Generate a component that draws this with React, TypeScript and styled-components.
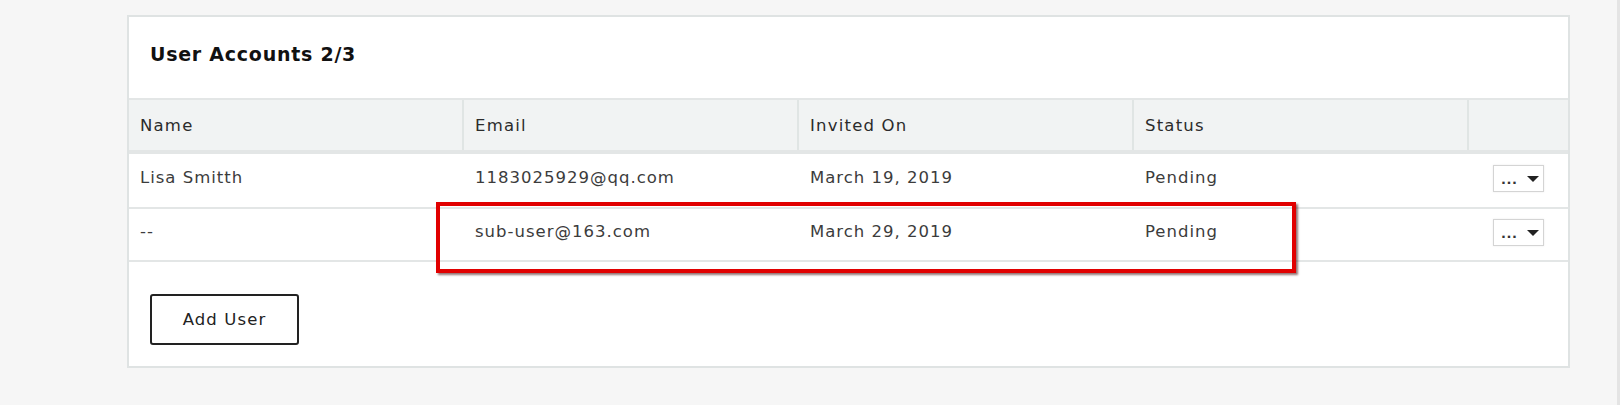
import React from 'react'
import styled, { createGlobalStyle } from 'styled-components'

const GlobalStyle = createGlobalStyle`
  html, body {
    margin: 0;
    padding: 0;
    background: #f6f6f6;
  }
  body {
    font-family: 'DejaVu Sans', 'Open Sans', Arial, sans-serif;
    color: #333;
  }
`

type Account = {
  name: string
  email: string
  invitedOn: string
  status: string
}

const accounts: Account[] = [
  { name: 'Lisa Smitth', email: '1183025929@qq.com', invitedOn: 'March 19, 2019', status: 'Pending' },
  { name: '--', email: 'sub-user@163.com', invitedOn: 'March 29, 2019', status: 'Pending' }
]

const columns = ['Name', 'Email', 'Invited On', 'Status', '']

const Page = styled.div`
  height: 405px;
  box-sizing: border-box;
  padding: 15px 0 0 127px;
  border-right: 3px solid #e4e4e4;
`

const Card = styled.section`
  width: 1443px;
  height: 353px;
  box-sizing: border-box;
  background: #fff;
  border: 2px solid #dfe3e3;
  display: flex;
  flex-direction: column;
`

const Title = styled.h2`
  margin: 0;
  height: 81px;
  box-sizing: border-box;
  padding: 26px 0 0 21px;
  font-size: 19px;
  line-height: 22px;
  font-weight: 700;
  color: #111;
  letter-spacing: 0.75px;
`

const Table = styled.div`
  position: relative;
`

const Row = styled.div<{ $head?: boolean }>`
  display: grid;
  grid-template-columns: 335px 335px 335px 335px 1fr;
  height: ${(p) => (p.$head ? '54px' : '55px')};
  box-sizing: border-box;
  background: ${(p) => (p.$head ? '#f1f3f3' : '#fff')};
  border-top: 2px solid #e3e6e6;
  ${(p) => (p.$head ? 'border-bottom: 2px solid #e3e6e6;' : '')}
  &:nth-last-child(2) {
    border-bottom: 2px solid #e3e6e6;
  }
`

const Cell = styled.div<{ $head?: boolean }>`
  display: flex;
  align-items: center;
  padding-left: 11px;
  padding-bottom: ${(p) => (p.$head ? '0' : '6px')};
  font-size: 16.5px;
  letter-spacing: ${(p) => (p.$head ? '1.2px' : '1px')};
  color: ${(p) => (p.$head ? '#2b2b2b' : '#3c3c3c')};
  border-right: ${(p) => (p.$head ? '2px solid #e0e5e4' : 'none')};
  &:last-child {
    border-right: none;
  }
`

const ActionCell = styled.div`
  display: flex;
  align-items: center;
  justify-content: flex-end;
  padding-right: 24px;
  padding-bottom: 4px;
`

const Dropdown = styled.button`
  width: 51px;
  height: 27px;
  box-sizing: border-box;
  border: 1px solid #d4d4d4;
  box-shadow: 0 0 2px rgba(0, 0, 0, 0.08);
  background: #fff;
  display: flex;
  align-items: center;
  justify-content: space-between;
  padding: 0 4px 0 7px;
  font-family: inherit;
  font-size: 13px;
  color: #333;
  cursor: pointer;
`

const Dots = styled.span`
  font-weight: 700;
  letter-spacing: 0.5px;
  line-height: 1;
  margin-top: 2px;
`

const Highlight = styled.div`
  position: absolute;
  left: 307px;
  top: 104px;
  width: 860px;
  height: 71px;
  box-sizing: border-box;
  border: 4px solid #e10000;
  box-shadow: 2px 2px 2px rgba(60, 0, 0, 0.55);
  pointer-events: none;
`

const Footer = styled.div`
  padding: 32px 0 0 21px;
`

const AddButton = styled.button`
  width: 149px;
  height: 51px;
  border: 2px solid #222;
  border-radius: 3px;
  background: #fff;
  font-family: inherit;
  font-size: 16.5px;
  letter-spacing: 1.1px;
  color: #222;
  cursor: pointer;
`

const Caret = () => (
  <svg width="12" height="8" viewBox="0 0 12 8">
    <path d="M0 1 L12 1 L6 7 Z" fill="#222" />
  </svg>
)

export default function App() {
  return (
    <Page>
      <GlobalStyle />
      <Card>
        <Title>User Accounts 2/3</Title>
        <Table>
          <Row $head>
            {columns.map((c, i) => (
              <Cell key={i} $head>
                {c}
              </Cell>
            ))}
          </Row>
          {accounts.map((a) => (
            <Row key={a.email}>
              <Cell>{a.name}</Cell>
              <Cell>{a.email}</Cell>
              <Cell>{a.invitedOn}</Cell>
              <Cell>{a.status}</Cell>
              <ActionCell>
                <Dropdown>
                  <Dots>...</Dots>
                  <Caret />
                </Dropdown>
              </ActionCell>
            </Row>
          ))}
          <Highlight />
        </Table>
        <Footer>
          <AddButton>Add User</AddButton>
        </Footer>
      </Card>
    </Page>
  )
}
